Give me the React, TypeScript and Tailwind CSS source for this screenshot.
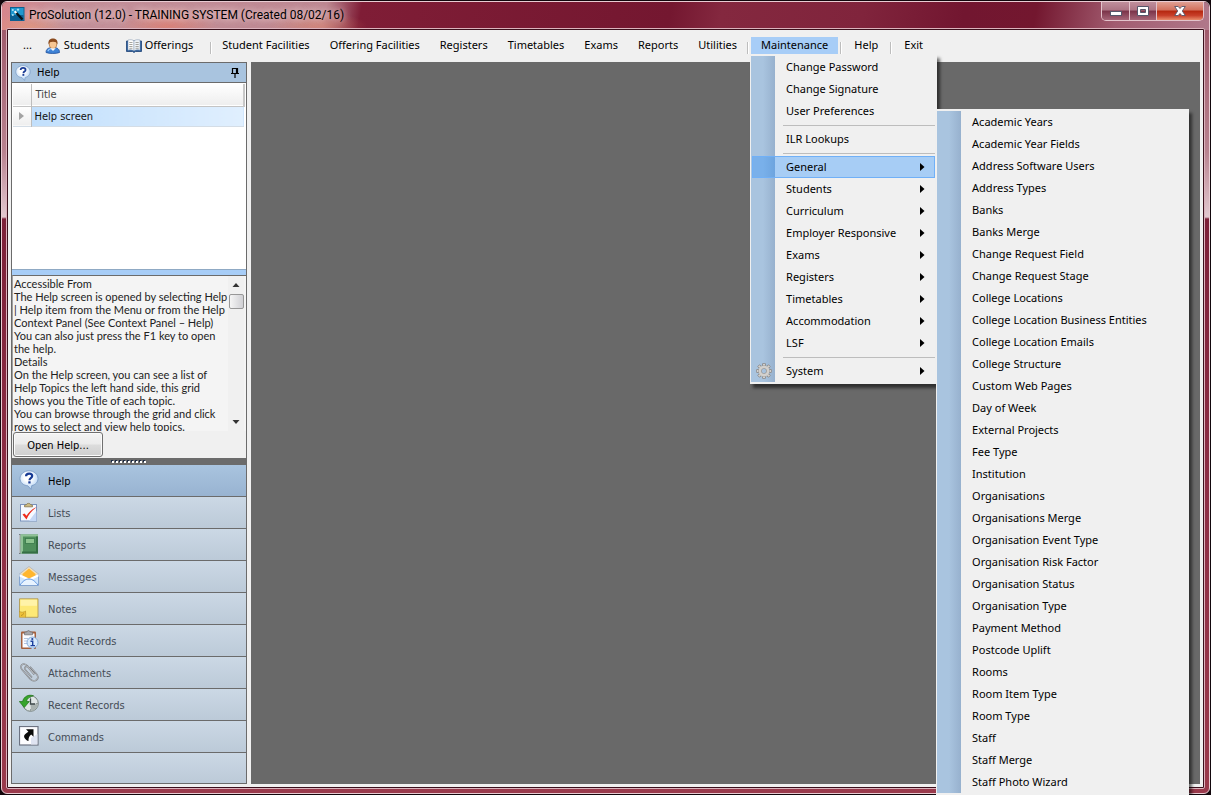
import { useId, type ReactNode } from "react";

const generalItems = [
  "Academic Years",
  "Academic Year Fields",
  "Address Software Users",
  "Address Types",
  "Banks",
  "Banks Merge",
  "Change Request Field",
  "Change Request Stage",
  "College Locations",
  "College Location Business Entities",
  "College Location Emails",
  "College Structure",
  "Custom Web Pages",
  "Day of Week",
  "External Projects",
  "Fee Type",
  "Institution",
  "Organisations",
  "Organisations Merge",
  "Organisation Event Type",
  "Organisation Risk Factor",
  "Organisation Status",
  "Organisation Type",
  "Payment Method",
  "Postcode Uplift",
  "Rooms",
  "Room Item Type",
  "Room Type",
  "Staff",
  "Staff Merge",
  "Staff Photo Wizard",
];

const helpLines = [
  "Accessible From",
  "The Help screen is opened by selecting Help",
  "| Help item from the Menu or from the Help",
  "Context Panel (See Context Panel – Help)",
  "You can also just press the F1 key to open",
  "the help.",
  "Details",
  "On the Help screen, you can see a list of",
  "Help Topics the left hand side, this grid",
  "shows you the Title of each topic.",
  "You can browse through the grid and click",
  "rows to select and view help topics.",
];

function WandIcon() {
  return (
    <svg viewBox="0 0 16 16" className="h-4 w-4 shrink-0" aria-hidden="true">
      <rect x="0.5" y="0.5" width="13.5" height="13" fill="#1f97cf" stroke="#0d5f8f" />
      <path d="M1 8h12.500v5H1z" fill="#0a5f92" />
      <path d="M5.500 5l7 7.500" stroke="#06141d" strokeWidth="2.4" />
      <path d="M4.600 4.200l1.800 1.800" stroke="#fff" strokeWidth="2.2" />
      <path d="M8 1.500v2.500M6.800 2.700h2.400M2.800 2v2M1.800 3h2M2.800 7v2M1.800 8h2" stroke="#c9f3ff" strokeWidth="0.8" />
    </svg>
  );
}

function StudentIcon() {
  return (
    <svg viewBox="0 0 16 16" className="h-4 w-4 shrink-0" aria-hidden="true">
      <path d="M1 14.500c0-3.500 2.500-5 7-5s6.500 1.500 6.500 5c-3 1.300-10.500 1.300-13.500 0z" fill="#3f83d6" stroke="#1f4f9c" strokeWidth="0.8" />
      <path d="M3 13c.5-2 2-2.500 5-2.500" stroke="#9fd0ff" strokeWidth="1.2" fill="none" />
      <ellipse cx="8" cy="6" rx="3.7" ry="4.5" fill="#f7c692" stroke="#a8672c" strokeWidth="0.7" />
      <path d="M3.500 6.500C2.800 2 5.500.5 8 .5s5.200 1.500 4.500 6c-.8-2-1.500-2.700-4.500-2.700S4.300 4.500 3.500 6.500z" fill="#8a4a1d" />
      <path d="M5.500 10.300L8 12.800l2.500-2.500" fill="#fff" stroke="#cfe2f7" strokeWidth="0.5" />
    </svg>
  );
}

function BookIcon() {
  return (
    <svg viewBox="0 0 16 14" className="h-[14px] w-4 shrink-0" aria-hidden="true">
      <path d="M.5 2h15v10.500h-6l-1.500 1-1.500-1h-6z" fill="#2f62a0" stroke="#1d4175" strokeWidth="0.8" />
      <path d="M2 1c2.500-.6 4.500-.3 6 .8v10c-1.500-1-3.500-1.200-6-.6z" fill="#fdfdfd" stroke="#7f93ad" strokeWidth="0.5" />
      <path d="M14 1c-2.500-.6-4.500-.3-6 .8v10c1.500-1 3.500-1.200 6-.6z" fill="#eef3f8" stroke="#7f93ad" strokeWidth="0.5" />
      <path d="M3.300 3.500h3.200M3.300 5.500h3.200M3.300 7.500h3.200M3.300 9.300h3.200M9.500 3.500h3.200M9.500 5.500h3.200M9.500 7.500h3.200M9.500 9.300h3.200" stroke="#9b9b95" strokeWidth="0.9" />
    </svg>
  );
}

function HelpIcon({ small = false }: { small?: boolean }) {
  const fill = useId();
  return (
    <svg viewBox="0 0 20 20" className={small ? "h-4 w-4 shrink-0" : "h-5 w-5 shrink-0"} aria-hidden="true">
      <defs>
        <radialGradient id={fill} cx="0.45" cy="0.35" r="0.7">
          <stop offset="0.3" stopColor="#ffffff" />
          <stop offset="1" stopColor="#a9cdf2" />
        </radialGradient>
      </defs>
      <path
        d="M10 .8c5 0 9 3.400 9 7.700 0 3.700-2.600 6.300-6.200 7.100L12 19.300l-3.200-3.500C4.300 15.400 1 12.500 1 8.500 1 4.200 5 .8 10 .8z"
        fill={`url(#${fill})`}
        stroke="#7596c2"
        strokeWidth="0.8"
      />
      <path d="M7 6.300c.1-1.800 1.300-2.700 3.100-2.700 1.900 0 3.100 1 3.100 2.500 0 2.100-2.700 2.100-2.700 4.100" fill="none" stroke="#173a94" strokeWidth="2.2" />
      <rect x="9.300" y="11.300" width="2.300" height="2.200" fill="#173a94" />
    </svg>
  );
}

function ListsIcon() {
  return (
    <svg viewBox="0 0 20 20" className="h-5 w-5 shrink-0" aria-hidden="true">
      <rect x="1.5" y="2.5" width="16" height="16.5" fill="#f6f9ff" stroke="#7b93bd" />
      <path d="M10 19h7.500V9z" fill="#c4d7f5" />
      <path d="M5.500 4.800V3.300L7.500 2.500c.3-1.500 3.700-1.500 4 0l2 .8v1.500z" fill="#cdbb82" stroke="#85744a" strokeWidth="0.8" />
      <path d="M3.500 12.500l4 5C9.500 12.500 13 8.500 17.800 5c-4.500 1.800-8 5-10.300 8.800L5.500 11.500z" fill="#ee2b1d" />
    </svg>
  );
}

function ReportsIcon() {
  return (
    <svg viewBox="0 0 20 20" className="h-5 w-5 shrink-0" aria-hidden="true">
      <rect x="1.500" y="0.500" width="17.500" height="19" fill="#4f8f5c" />
      <path d="M1.500.5h17.500v2h-15v17h-2.500z" fill="#8fc296" />
      <path d="M17 2.500h2v17h-16v-2h14z" fill="#356f44" />
      <rect x="6.500" y="4.500" width="9" height="5" fill="#8dc48f" stroke="#38784a" strokeWidth="0.8" />
      <path d="M.7.500v19" stroke="#222" strokeWidth="1.4" strokeDasharray="1 1" />
      <path d="M.7 1.500v18" stroke="#fff" strokeWidth="1.4" strokeDasharray="1 1" />
    </svg>
  );
}

function MessagesIcon() {
  return (
    <svg viewBox="0 0 20 20" className="h-5 w-5 shrink-0" aria-hidden="true">
      <path d="M.5 8L10 .5 19.500 8v3H.5z" fill="#f3dfb8" stroke="#a5a6ad" strokeWidth="0.6" />
      <path d="M3.500 8L10 2.500 16.500 8v5h-13z" fill="#ffb62e" />
      <path d="M.5 8l9.500 6.500L19.500 8v11.500H.5z" fill="#cfe5fd" stroke="#7397c9" strokeWidth="0.8" />
      <path d="M.5 8l9.500 4.500L19.500 8v2.500L10 15 .5 10.500z" fill="#ffffff" />
      <path d="M1 19c3-4 5.500-6 9-6s5.700 2 9 6" fill="#e8f3ff" stroke="#5b93e0" strokeWidth="1" />
    </svg>
  );
}

function NotesIcon() {
  return (
    <svg viewBox="0 0 20 20" className="h-5 w-5 shrink-0" aria-hidden="true">
      <path d="M.5.800h18.500v18.500H6.500L.5 14z" fill="#fde977" stroke="#a9914a" strokeWidth="0.8" />
      <path d="M1.500 1.800h16.500v6H1.500z" fill="#fff3a8" />
      <path d="M.5 13.500c2 1 4.500 1 6-.5.3 2 .2 4.500 0 6.300H.5z" fill="#eec23a" stroke="#b98f22" strokeWidth="0.6" />
      <path d="M2 17.500c1.500-.3 2.300-1 2.600-2.200" stroke="#b98f22" strokeWidth="0.9" fill="none" />
    </svg>
  );
}

function AuditIcon() {
  return (
    <svg viewBox="0 0 20 20" className="h-5 w-5 shrink-0" aria-hidden="true">
      <rect x="2" y="1.500" width="15" height="17.500" fill="#a5603c" rx="1" />
      <rect x="3.500" y="3.500" width="12" height="14" fill="#fbfcff" />
      <path d="M5.500 4.800V2.300L8 1.800c.3-1.600 2.700-1.600 3 0l2.500.5v2.500z" fill="#a8a8ac" stroke="#6b6b70" strokeWidth="0.7" />
      <path d="M5 8.500h4M5 11h3M5 13.500h3" stroke="#a9bddb" strokeWidth="0.9" />
      <circle cx="13.500" cy="12.500" r="5.500" fill="#d6e9fb" stroke="#7ba3d2" strokeWidth="0.9" />
      <path d="M12 17.500l1.500 2.500 2.500-2.500z" fill="#b6d2f0" />
      <path d="M11.500 11.300h2.200v4.200M11.500 15.600h4.500" stroke="#1c3f9e" strokeWidth="1.4" fill="none" />
      <circle cx="13.300" cy="9" r="1.100" fill="#1c3f9e" />
    </svg>
  );
}

const clipPath =
  "M15.500 12L8.500 4C6.800 2 4.500 1.500 3 2.800 1.500 4.200 1.800 6.200 3.400 8l7.600 8.700c2 2.200 4.800 2.700 6.600 1.200 1.700-1.500 1.600-4-.3-6.200L11 4.700M13 15.500L6.500 8c-1-1.200-1-2.300-.2-3 .8-.7 2-.5 3 .6l6 6.900";

function ClipIcon() {
  return (
    <svg viewBox="0 0 20 20" className="h-5 w-5 shrink-0" fill="none" aria-hidden="true">
      <path d={clipPath} stroke="#777b80" strokeWidth="1.5" />
      <path d={clipPath} stroke="#e3e5e8" strokeWidth="0.5" />
    </svg>
  );
}

function RecentIcon() {
  return (
    <svg viewBox="0 0 20 20" className="h-5 w-5 shrink-0" aria-hidden="true">
      <circle cx="11.500" cy="9.500" r="7.800" fill="#dfe5e5" stroke="#76827f" strokeWidth="1" />
      <path d="M12 16.800c4-.5 6.500-3 6.800-7.300l-7.300.5z" fill="#a9b2b0" />
      <path d="M11.500 2.500v2M11.500 15v2M17 9.500h2" stroke="#8c9796" strokeWidth="0.9" />
      <path d="M11.500 4.500V10H16" stroke="#3f494b" strokeWidth="1.3" fill="none" />
      <path d="M14.500 1.800C9.500 0 4.600 2.500 3.700 7.500H.3l5 6 5-6H7.500c.5-2.800 3-5 7-5.700z" fill="#37a52c" stroke="#1e7417" strokeWidth="0.7" />
    </svg>
  );
}

function CommandsIcon() {
  return (
    <svg viewBox="0 0 20 20" className="h-5 w-5 shrink-0" aria-hidden="true">
      <rect x="0.500" y="0.500" width="18.500" height="18.500" fill="#fdfdff" stroke="#6d7382" strokeWidth="1.2" />
      <path d="M12 18.400V12l6.400-4v10.400z" fill="#dfe4f2" />
      <path d="M7 3.200h7.500v7.500l-2.300-2.300c-2 1.600-2.900 3.600-2.700 6.600-2.500-.8-5-3.500-4.300-5.600.6-1.500 2.800-2.600 4.200-3.700z" fill="#0a0a0a" />
    </svg>
  );
}

const gearAngles = [0, 45, 90, 135, 180, 225, 270, 315];

function GearIcon() {
  return (
    <svg viewBox="0 0 16 16" className="h-4 w-4" aria-hidden="true">
      {gearAngles.map((angle) => (
        <rect
          key={angle}
          x="6.500"
          y="0.400"
          width="3"
          height="4"
          rx="0.6"
          fill="#d2d0cd"
          stroke="#858585"
          strokeWidth="0.8"
          transform={`rotate(${angle} 8 8)`}
        />
      ))}
      <circle cx="8" cy="8" r="4" fill="none" stroke="#8a8a8a" strokeWidth="3.600" />
      <circle cx="8" cy="8" r="4.100" fill="none" stroke="#d2d0cd" strokeWidth="2.800" />
    </svg>
  );
}

const panels: { label: string; icon: ReactNode; active?: boolean }[] = [
  { label: "Help", icon: <HelpIcon />, active: true },
  { label: "Lists", icon: <ListsIcon /> },
  { label: "Reports", icon: <ReportsIcon /> },
  { label: "Messages", icon: <MessagesIcon /> },
  { label: "Notes", icon: <NotesIcon /> },
  { label: "Audit Records", icon: <AuditIcon /> },
  { label: "Attachments", icon: <ClipIcon /> },
  { label: "Recent Records", icon: <RecentIcon /> },
  { label: "Commands", icon: <CommandsIcon /> },
];

function TitleBar() {
  return (
    <header className="flex h-[26px] shrink-0 items-center pl-2">
      <WandIcon />
      <h1 className="ml-[3px] flex-1 font-[Roboto,sans-serif] text-xs leading-4 text-black [text-shadow:0_0_6px_rgba(255,225,225,0.9),0_0_10px_rgba(255,225,225,0.7)]">
        ProSolution (12.0) - TRAINING SYSTEM (Created 08/02/16)
      </h1>
      <div className="mr-[5px] flex h-[19px] self-start overflow-hidden rounded-b-[5px] border border-t-0 border-[#e3c3cb]">
        <button
          type="button"
          aria-label="Minimize"
          className="flex w-7 items-center justify-center border-r border-[#e3c3cb] bg-[linear-gradient(#c08f9c,#ad7484_45%,#7b3349_50%,#a56577)]"
        >
          <svg viewBox="0 0 12 6" className="mt-1.5 h-1.5 w-3" aria-hidden="true">
            <rect x="0.500" y="0.500" width="11" height="4" fill="#fff" stroke="#56566a" />
          </svg>
        </button>
        <button
          type="button"
          aria-label="Maximize"
          className="flex w-[27px] items-center justify-center border-r border-[#e3c3cb] bg-[linear-gradient(#c08f9c,#ad7484_45%,#7b3349_50%,#a56577)]"
        >
          <svg viewBox="0 0 12 10" className="h-2.5 w-3" aria-hidden="true">
            <path d="M.5.5h11v9H.5zM3.500 3.500v3h5v-3z" fillRule="evenodd" fill="#fff" stroke="#56566a" />
          </svg>
        </button>
        <button
          type="button"
          aria-label="Close"
          className="flex w-[46px] items-center justify-center bg-[linear-gradient(#e0a093,#d2705c_45%,#b5270f_50%,#c8402a_75%,#e88d6c)]"
        >
          <svg viewBox="0 0 12 10" className="h-2.5 w-3" aria-hidden="true">
            <path d="M.7.500h3.500L6 2.500 7.800.5h3.500L8.300 5l3 4.500H7.800L6 7.500l-1.800 2H.7l3-4.500z" fill="#fff" stroke="#56566a" strokeWidth="0.9" />
          </svg>
        </button>
      </div>
    </header>
  );
}

function MenuRow({
  label,
  icon,
  submenu,
  active,
}: {
  label: string;
  icon?: ReactNode;
  submenu?: boolean;
  active?: boolean;
}) {
  return (
    <li role="none">
      <button
        type="button"
        role="menuitem"
        aria-haspopup={submenu ? "menu" : undefined}
        className={`flex h-[22px] w-full items-center border pr-[9px] text-left ${
          active ? "border-[#70b0f7] bg-[#1f8cfe]/35" : "border-transparent"
        }`}
      >
        <span className="flex w-[33px] shrink-0 pl-[3px]">{icon}</span>
        <span className="flex-1">{label}</span>
        {submenu && (
          <svg viewBox="0 0 5 8" className="h-2 w-[5px]" aria-hidden="true">
            <path d="M0 0l4.500 4L0 8z" fill="#000" />
          </svg>
        )}
      </button>
    </li>
  );
}

function MenuDivider() {
  return <li role="separator" className="mt-[3px] mb-0.5 ml-[31px] h-px bg-[#bdbdbd]" />;
}

const menuSurface =
  "border-y-2 border-l border-[#f0f0f0] bg-[linear-gradient(to_right,#a9c4df_0,#a9c4df_12px,#97b1ce_24px,#f0f0f0_24px)] bg-padding-box pr-0.5 pl-px shadow-[3px_4px_3px_rgba(0,0,0,0.55)]";

function MaintenanceMenu() {
  return (
    <div className="absolute top-full -left-px z-10 w-[187px]">
      <ul role="menu" aria-label="Maintenance" className={menuSurface}>
        <MenuRow label="Change Password" />
        <MenuRow label="Change Signature" />
        <MenuRow label="User Preferences" />
        <MenuDivider />
        <MenuRow label="ILR Lookups" />
        <MenuDivider />
        <MenuRow label="General" submenu active />
        <MenuRow label="Students" submenu />
        <MenuRow label="Curriculum" submenu />
        <MenuRow label="Employer Responsive" submenu />
        <MenuRow label="Exams" submenu />
        <MenuRow label="Registers" submenu />
        <MenuRow label="Timetables" submenu />
        <MenuRow label="Accommodation" submenu />
        <MenuRow label="LSF" submenu />
        <MenuDivider />
        <MenuRow label="System" icon={<GearIcon />} submenu />
      </ul>
      <ul role="menu" aria-label="General" className={`absolute top-[55px] left-[186px] w-[253px] ${menuSurface}`}>
        {generalItems.map((item) => (
          <MenuRow key={item} label={item} />
        ))}
      </ul>
    </div>
  );
}

function BarItem({ label, icon }: { label: string; icon?: ReactNode }) {
  return (
    <button type="button" className="flex h-[17px] items-center gap-[3px] px-2.5">
      {icon}
      {label}
    </button>
  );
}

function BarDivider() {
  return <span className="mt-1 h-3 w-0.5 border-r border-l border-r-white border-l-[#bdbdbd]" />;
}

function MenuBar() {
  return (
    <nav aria-label="Main menu" className="flex h-8 shrink-0 items-end bg-[#f0f0f0] pb-2 pl-[5px] whitespace-nowrap">
      <BarItem label="..." />
      <div className="-ml-[7px] flex -space-x-1">
        <BarItem label="Students" icon={<StudentIcon />} />
        <BarItem label="Offerings" icon={<BookIcon />} />
      </div>
      <div className="flex items-center pl-[7px]">
        <BarDivider />
        <BarItem label="Student Facilities" />
        <BarItem label="Offering Facilities" />
        <BarItem label="Registers" />
        <BarItem label="Timetables" />
        <BarItem label="Exams" />
        <BarItem label="Reports" />
        <BarItem label="Utilities" />
        <BarDivider />
      </div>
      <div className="relative mx-0.5">
        <button type="button" aria-expanded="true" className="block h-[17px] bg-[#a7cdf7] px-2.5">
          Maintenance
        </button>
        <MaintenanceMenu />
      </div>
      <div className="flex items-center gap-0.5">
        <BarDivider />
        <BarItem label="Help" />
        <BarDivider />
        <BarItem label="Exit" />
      </div>
    </nav>
  );
}

function HelpPanel() {
  return (
    <aside className="flex w-[236px] shrink-0 flex-col border border-[#6b6b6b] bg-[#f0f0f0] font-['DejaVu_Sans_Condensed',sans-serif]">
      <div className="flex h-5 shrink-0 items-center gap-1.5 border-b border-[#6b6b6b] bg-[#a9c4df] pr-[7px] pl-[3px]">
        <HelpIcon small />
        <h2 className="flex-1 pt-0.5">Help</h2>
        <button type="button" aria-label="Pin panel">
          <svg viewBox="0 0 8 10" className="h-2.5 w-2" aria-hidden="true">
            <path d="M1.500 5.500V.5h5v5M5.500.5v5M0 5.500h8M4 5.500V10" fill="none" stroke="#000" strokeWidth="1.2" />
          </svg>
        </button>
      </div>
      <div className="min-h-0 flex-1 bg-white p-px">
        <table className="w-full border-collapse text-left">
          <thead>
            <tr className="h-[22px] border-b border-[#c4c4c4] bg-linear-to-b from-white to-[#eeeeee]">
              <th aria-label="Row marker" className="w-[18px] border-r border-[#bdbdbd]" />
              <th className="border-r-2 border-[#c8c8c8] pl-1 font-normal text-[#444]">Title</th>
            </tr>
          </thead>
          <tbody>
            <tr className="h-5 border-b border-[#d4dde6]">
              <td className="border-r border-[#bdbdbd] bg-linear-to-b from-white to-[#eeeeee] pl-1.5">
                <svg viewBox="0 0 5 8" className="h-2 w-[5px]" aria-hidden="true">
                  <path d="M0 0l5 4-5 4z" fill="#a3a3a3" />
                </svg>
              </td>
              <td className="bg-linear-to-r from-[#c1dffc] to-[#e0effe] pt-0.5 pl-[3px] text-[#111]">Help screen</td>
            </tr>
          </tbody>
        </table>
      </div>
      <div className="h-[6px] shrink-0 border-t border-[#8fa9c4] bg-[#a7cdf7]" />
      <div className="flex h-[156px] shrink-0 border-t border-l border-t-[#6b6b6b] border-l-[#a0a0a0] bg-[#f4f4f4] pr-0.5">
        <div className="min-w-0 flex-1 overflow-hidden pt-px pl-px font-[Lato,sans-serif] leading-[13px] whitespace-nowrap text-[#222]">
          {helpLines.map((line) => (
            <p key={line}>{line}</p>
          ))}
        </div>
        <div className="flex w-4 shrink-0 flex-col items-center bg-[#f0f0f0]">
          <button type="button" aria-label="Scroll up" className="flex h-[18px] w-full items-center justify-center">
            <svg viewBox="0 0 8 4" className="h-1 w-2" aria-hidden="true">
              <path d="M4 0l3.500 4h-7z" fill="#333" />
            </svg>
          </button>
          <span className="h-[15px] w-[15px] rounded-[2px] border border-[#979797] bg-linear-to-r from-[#f5f5f5] to-[#d0d0d4]" />
          <span className="flex-1" />
          <button type="button" aria-label="Scroll down" className="flex h-[18px] w-full items-center justify-center">
            <svg viewBox="0 0 8 4" className="h-1 w-2" aria-hidden="true">
              <path d="M4 4L.5 0h7z" fill="#333" />
            </svg>
          </button>
        </div>
      </div>
      <div className="flex h-[27px] shrink-0 items-center pl-px">
        <button
          type="button"
          className="h-[25px] w-[90px] rounded-[3px] border border-[#707070] bg-[linear-gradient(#f4f4f4,#ebebeb_48%,#dcdcdc_52%,#cfcfcf)] pt-1 text-black shadow-[inset_0_0_0_1px_#fbfbfb]"
        >
          Open Help...
        </button>
      </div>
      <div className="flex h-[7px] shrink-0 items-center justify-center bg-[#6b6b6b]">
        <svg viewBox="0 0 36 3" className="h-[3px] w-9" aria-hidden="true">
          <path d="M0 1h36" stroke="#1c2b45" strokeWidth="2" strokeDasharray="2 2" />
          <path d="M1 2h35" stroke="#fff" strokeWidth="2" strokeDasharray="2 2" />
        </svg>
      </div>
      <ul className="shrink-0">
        {panels.map((panel) => (
          <li key={panel.label}>
            <button
              type="button"
              className={`flex h-8 w-full items-center gap-[9px] border-b border-[#6b6b6b] bg-linear-to-b pb-px pl-[7px] ${
                panel.active ? "from-[#a9c4df] to-[#98b3d1] text-black" : "from-[#cbd8e5] to-[#bccad8] text-[#444b55]"
              }`}
            >
              {panel.icon}
              <span className="pt-1">{panel.label}</span>
            </button>
          </li>
        ))}
      </ul>
      <div className="h-[30px] shrink-0 bg-linear-to-b from-[#cbd8e5] to-[#bccad8]" />
    </aside>
  );
}

export default function App() {
  return (
    <div className="h-screen overflow-hidden bg-[#12070c] p-px font-['Noto_Sans',sans-serif] text-[11px] text-black">
      <div className="flex h-full flex-col rounded-[6px] border border-[#e9ccd3] bg-[linear-gradient(to_bottom,transparent_0,transparent_28px,#a05b6c_28px,#b98390_150px,#e2c8cf_215px,#7d2139_217px,#8e2e45_500px,#9a3a4c_100%)]">
        <div className="flex min-h-0 flex-1 flex-col rounded-[5px] bg-[radial-gradient(ellipse_50px_20px_at_165px_24px,rgba(240,120,90,0.5),transparent),radial-gradient(ellipse_40px_16px_at_25px_26px,rgba(240,160,110,0.5),transparent),radial-gradient(ellipse_50px_14px_at_315px_24px,rgba(225,130,100,0.5),transparent),linear-gradient(100deg,#d7858c_0,#c4919a_60px,#bd8892_320px,#7f1d36_355px,#741730_660px,#84283f_710px,#80243c_850px,#721630_950px,#73172f_1020px,#a25c70_1100px,#b0788a_100%)] bg-[length:100%_28px] bg-no-repeat">
          <TitleBar />
          <div className="flex min-h-0 flex-1 flex-col px-1 pb-1">
            <div className="flex min-h-0 flex-1 flex-col rounded-[2px] border border-[#dcb3bd] bg-[#3a101c] p-px">
              <MenuBar />
              <div className="flex min-h-0 flex-1 gap-1 bg-[#f0f0f0] px-[3px] pb-[3px]">
                <HelpPanel />
                <main aria-label="Workspace" className="flex-1 bg-[#696969]" />
              </div>
            </div>
          </div>
        </div>
      </div>
    </div>
  );
}
